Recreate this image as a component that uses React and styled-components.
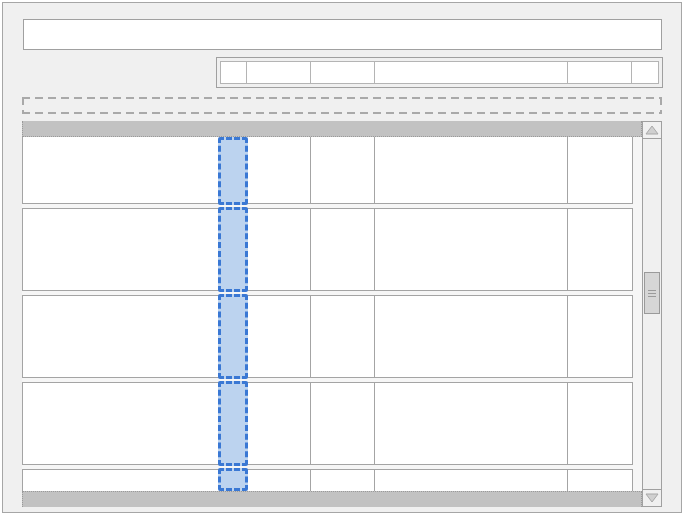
import styled, { createGlobalStyle } from "styled-components";

const GlobalStyle = createGlobalStyle`
  html, body {
    margin: 0;
    padding: 0;
    background: #ffffff;
    font-family: "Liberation Sans", Arial, sans-serif;
  }
`

const Frame = styled.div`
  box-sizing: border-box;
  margin: 2px;
  width: 680px;
  height: 511px;
  border: 1px solid #a6a6a6;
  background: #f0f0f0;
  padding: 16px 19px 5px 20px;
  display: flex;
  flex-direction: column;
`
const TitleInput = styled.div`
  box-sizing: border-box;
  height: 31px;
  border: 1px solid #a0a0a0;
  background: #ffffff;
`
const Toolbar = styled.div`
  box-sizing: border-box;
  align-self: flex-end;
  margin-top: 7px;
  margin-right: -1px;
  width: 447px;
  height: 31px;
  border: 1px solid #a0a0a0;
  padding: 3px;
  background: #f0f0f0;
`
const ToolbarCells = styled.div`
  box-sizing: border-box;
  height: 100%;
  border: 1px solid #b4b4b4;
  background: #ffffff;
  display: grid;
  grid-template-columns: 25px 64px 64px 193px 64px 1fr;
`
const ToolbarCell = styled.div`
  border-left: ${(p) => (p.$first ? "none" : "1px solid #b4b4b4")};
`
const dash = "#a9a9a9";
const DropZone = styled.div`
  box-sizing: border-box;
  margin-top: 9px;
  margin-left: -1px;
  height: 17px;
  background-image:
    repeating-linear-gradient(90deg, ${dash} 0 8px, transparent 8px 13px),
    repeating-linear-gradient(90deg, ${dash} 0 8px, transparent 8px 13px),
    repeating-linear-gradient(180deg, ${dash} 0 8px, transparent 8px 13px),
    repeating-linear-gradient(180deg, ${dash} 0 8px, transparent 8px 13px);
  background-size: 100% 2px, 100% 2px, 2px 100%, 2px 100%;
  background-position: 0 0, 0 100%, 0 0, 100% 0;
  background-repeat: no-repeat;
`
const Table = styled.div`
  margin-top: 7px;
  margin-left: -1px;
  flex: 1;
  display: flex;
  min-height: 0;
`
const Main = styled.div`
  width: 620px;
  display: flex;
  flex-direction: column;
  background: #f6f6f6;
`
const Band = styled.div`
  height: 15px;
  background: #c2c2c2;
  border: 1px dotted #9a9a9a;
  border-${(p) => p.$side}: none;
  flex-shrink: 0;
`
const Body = styled.div`
  flex: 1;
  overflow: hidden;
`
const RowList = styled.div`
  display: flex;
  flex-direction: column;
  gap: 4px;
`
const rowHeight = { first: "67px", last: "22px", full: "83px" };
const Row = styled.div`
  box-sizing: border-box;
  width: 611px;
  height: ${(p) => rowHeight[p.$kind]};
  flex-shrink: 0;
  border: 1px solid #a4a4a4;
  border-top: ${(p) => (p.$kind === "first" ? "none" : "1px solid #a4a4a4")};
  border-bottom: ${(p) => (p.$kind === "last" ? "none" : "1px solid #a4a4a4")};
  background: #ffffff;
  display: grid;
  grid-template-columns: 196px 28px 63px 64px 193px 1fr;
`
const Cell = styled.div`
  border-left: ${(p) => (p.$first ? "none" : "1px solid #a4a4a4")};
`
const Selected = styled.div`
  box-sizing: border-box;
  margin: ${(p) => (p.$kind === "first" ? "0" : "-2px")} -1px
    ${(p) => (p.$kind === "last" ? "0" : "-2px")} -1px;
  border: 3px dashed #3a78d4;
  border-radius: 2px;
  background: #bcd3ef;
`
const Scrollbar = styled.div`
  box-sizing: border-box;
  width: 20px;
  border: 1px solid #a0a0a0;
  background: #f0f0f0;
  display: flex;
  flex-direction: column;
`
const ArrowButton = styled.div`
  height: 16px;
  flex-shrink: 0;
  display: flex;
  align-items: center;
  justify-content: center;
  border-${(p) => (p.$down ? "top" : "bottom")}: 1px solid #a0a0a0;
`
const Track = styled.div`
  flex: 1;
  display: flex;
  flex-direction: column;
  padding: 0 1px;
`
const Thumb = styled.div`
  box-sizing: border-box;
  margin-top: 133px;
  height: 42px;
  border: 1px solid #9a9a9a;
  background: #d6d6d6;
  display: flex;
  flex-direction: column;
  align-items: center;
  justify-content: center;
  gap: 2px;
`
const Grip = styled.div`
  width: 8px;
  height: 1px;
  background: #9a9a9a;
`

const Arrow = ({ down }) => (
  <svg width="14" height="10" viewBox="0 0 14 10">
    <polygon
      points={down ? "1,1 13,1 7,9" : "1,9 13,9 7,1"}
      fill="#d0d0d0"
      stroke="#a8a8a8"
      strokeWidth="1"
    />
  </svg>
)

export default function App() {
  const toolbar = [0, 1, 2, 3, 4, 5];
  const rows = ["first", "full", "full", "full", "last"];

  return (
    <>
      <GlobalStyle />
      <Frame>
        <TitleInput />

        <Toolbar>
          <ToolbarCells>
            {toolbar.map((i) => (
              <ToolbarCell key={i} $first={i === 0} />
            ))}
          </ToolbarCells>
        </Toolbar>

        <DropZone />

        <Table>
          <Main>
            <Band $side="top" />
            <Body>
              <RowList>
                {rows.map((kind, i) => (
                  <Row key={i} $kind={kind}>
                    <Cell $first />
                    <Selected $kind={kind} />
                    <Cell $first />
                    <Cell />
                    <Cell />
                    <Cell />
                  </Row>
                ))}
              </RowList>
            </Body>
            <Band $side="bottom" />
          </Main>
          <Scrollbar>
            <ArrowButton>
              <Arrow />
            </ArrowButton>
            <Track>
              <Thumb>
                <Grip />
                <Grip />
                <Grip />
              </Thumb>
            </Track>
            <ArrowButton $down>
              <Arrow down />
            </ArrowButton>
          </Scrollbar>
        </Table>
      </Frame>
    </>
  )
}
